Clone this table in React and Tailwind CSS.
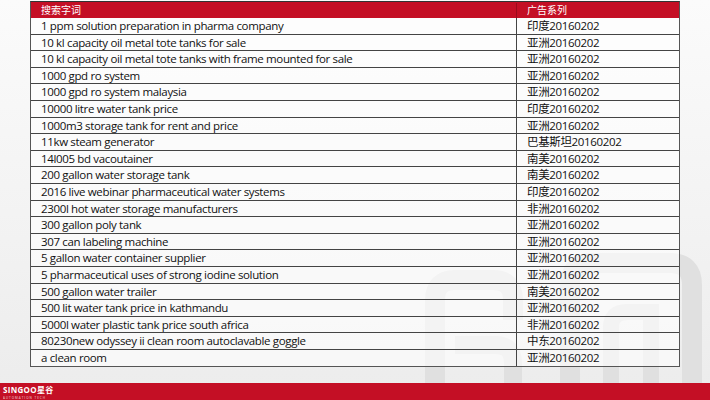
import React from "react";

const rows = [
  ["1 ppm solution preparation in pharma company", "印度20160202"],
  ["10 kl capacity oil metal tote tanks for sale", "亚洲20160202"],
  ["10 kl capacity oil metal tote tanks with frame mounted for sale", "亚洲20160202"],
  ["1000 gpd ro system", "亚洲20160202"],
  ["1000 gpd ro system malaysia", "亚洲20160202"],
  ["10000 litre water tank price", "印度20160202"],
  ["1000m3 storage tank for rent and price", "亚洲20160202"],
  ["11kw steam generator", "巴基斯坦20160202"],
  ["14l005 bd vacoutainer", "南美20160202"],
  ["200 gallon water storage tank", "南美20160202"],
  ["2016 live webinar pharmaceutical water systems", "印度20160202"],
  ["2300l hot water storage manufacturers", "非洲20160202"],
  ["300 gallon poly tank", "亚洲20160202"],
  ["307 can labeling machine", "亚洲20160202"],
  ["5 gallon water container supplier", "亚洲20160202"],
  ["5 pharmaceutical uses of strong iodine solution", "亚洲20160202"],
  ["500 gallon water trailer", "南美20160202"],
  ["500 lit water tank price in kathmandu", "亚洲20160202"],
  ["5000l water plastic tank price south africa", "非洲20160202"],
  ["80230new odyssey ii clean room autoclavable goggle", "中东20160202"],
  ["a clean room", "亚洲20160202"],
];

const font = { fontFamily: '"Open Sans", "Noto Sans CJK SC", sans-serif' };

export default function App() {
  return (
    <main
      className="relative w-[710px] h-[400px] overflow-hidden bg-gradient-to-b from-[#fbfbfb] to-[#ececec] flex flex-col"
      style={font}
    >
      {/* watermark logo */}
      <svg
        className="absolute left-[415px] top-[250px]"
        width="295"
        height="140"
        viewBox="0 0 295 140"
        fill="none"
        stroke="#e0e0e0"
      >
        <path d="M20 140 V50 Q20 30 40 30 H78 Q98 30 98 50 V70" strokeWidth="20" />
        <path d="M40 95 H80 Q98 95 98 113 V140" strokeWidth="18" />
        <path d="M155 140 V35 Q155 13 177 13 H255 Q277 13 277 35 V140" strokeWidth="20" />
        <path d="M196 140 V78 Q196 62 212 62 H236 V140" strokeWidth="16" />
      </svg>

      <div className="relative mx-[30px] mt-px border border-[#555] border-t-[#333]">
        {/* header */}
        <div className="flex h-[16px] bg-[#c40f25] text-white text-[10px] items-center">
          <div className="w-[486px] pl-[10px] border-r border-[#9a0b1c]">搜索字词</div>
          <div className="flex-1 pl-[10px]">广告系列</div>
        </div>
        {rows.map(([term, series], i) => (
          <div
            key={i}
            className={
              "flex h-[16.6px] items-center text-[11.5px] tracking-[-0.35px] text-[#111] bg-white/60 " +
              (i < rows.length - 1 ? "border-b border-[#444]" : "")
            }
          >
            <div className="w-[486px] h-full flex items-center pl-[10px] border-r border-[#444] leading-none">
              {term}
            </div>
            <div className="flex-1 pl-[10px] leading-none">{series}</div>
          </div>
        ))}
      </div>

      <footer className="relative mt-auto h-[17px] bg-[#c40f25] flex items-start pl-[3px] pt-[3px]">
        <div className="flex flex-col leading-none text-white">
          <span className="text-[8px] font-bold tracking-[0.3px] leading-[7px] h-[7px]">SINGOO星谷</span>
          <div className="h-[4px] mt-[3px] overflow-visible">
            <span className="block text-[6px] tracking-[2px] leading-[6px] opacity-80 scale-50 origin-top-left whitespace-nowrap">
              AUTOMATION TECH
            </span>
          </div>
        </div>
      </footer>
    </main>
  );
}
